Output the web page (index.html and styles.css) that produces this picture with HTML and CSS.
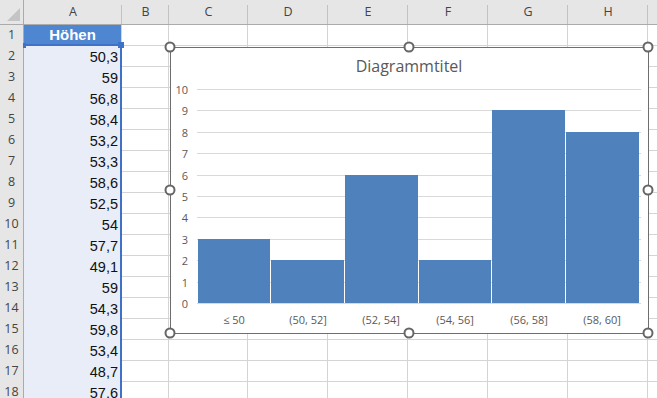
FILE: index.html
```html
<!DOCTYPE html>
<html lang="de">
<head>
<meta charset="utf-8">
<title>Histogramm</title>
<link rel="stylesheet" href="styles.css">
</head>
<body>
<div class="sheet">
  <div class="row hdr">
    <div class="corner"><span class="tri"></span></div>
    <div class="ch">A</div><div class="ch">B</div><div class="ch">C</div><div class="ch">D</div><div class="ch">E</div><div class="ch">F</div><div class="ch">G</div><div class="ch">H</div><div class="ch"></div>
  </div>
  <div class="row"><div class="rh">1</div><div class="c title-cell">Höhen</div><div class="c"></div><div class="c"></div><div class="c"></div><div class="c"></div><div class="c"></div><div class="c"></div><div class="c"></div><div class="c"></div></div>
  <div class="row"><div class="rh">2</div><div class="c val">50,3</div><div class="c"></div><div class="c"></div><div class="c"></div><div class="c"></div><div class="c"></div><div class="c"></div><div class="c"></div><div class="c"></div></div>
  <div class="row"><div class="rh">3</div><div class="c val">59</div><div class="c"></div><div class="c"></div><div class="c"></div><div class="c"></div><div class="c"></div><div class="c"></div><div class="c"></div><div class="c"></div></div>
  <div class="row"><div class="rh">4</div><div class="c val">56,8</div><div class="c"></div><div class="c"></div><div class="c"></div><div class="c"></div><div class="c"></div><div class="c"></div><div class="c"></div><div class="c"></div></div>
  <div class="row"><div class="rh">5</div><div class="c val">58,4</div><div class="c"></div><div class="c"></div><div class="c"></div><div class="c"></div><div class="c"></div><div class="c"></div><div class="c"></div><div class="c"></div></div>
  <div class="row"><div class="rh">6</div><div class="c val">53,2</div><div class="c"></div><div class="c"></div><div class="c"></div><div class="c"></div><div class="c"></div><div class="c"></div><div class="c"></div><div class="c"></div></div>
  <div class="row"><div class="rh">7</div><div class="c val">53,3</div><div class="c"></div><div class="c"></div><div class="c"></div><div class="c"></div><div class="c"></div><div class="c"></div><div class="c"></div><div class="c"></div></div>
  <div class="row"><div class="rh">8</div><div class="c val">58,6</div><div class="c"></div><div class="c"></div><div class="c"></div><div class="c"></div><div class="c"></div><div class="c"></div><div class="c"></div><div class="c"></div></div>
  <div class="row"><div class="rh">9</div><div class="c val">52,5</div><div class="c"></div><div class="c"></div><div class="c"></div><div class="c"></div><div class="c"></div><div class="c"></div><div class="c"></div><div class="c"></div></div>
  <div class="row"><div class="rh">10</div><div class="c val">54</div><div class="c"></div><div class="c"></div><div class="c"></div><div class="c"></div><div class="c"></div><div class="c"></div><div class="c"></div><div class="c"></div></div>
  <div class="row"><div class="rh">11</div><div class="c val">57,7</div><div class="c"></div><div class="c"></div><div class="c"></div><div class="c"></div><div class="c"></div><div class="c"></div><div class="c"></div><div class="c"></div></div>
  <div class="row"><div class="rh">12</div><div class="c val">49,1</div><div class="c"></div><div class="c"></div><div class="c"></div><div class="c"></div><div class="c"></div><div class="c"></div><div class="c"></div><div class="c"></div></div>
  <div class="row"><div class="rh">13</div><div class="c val">59</div><div class="c"></div><div class="c"></div><div class="c"></div><div class="c"></div><div class="c"></div><div class="c"></div><div class="c"></div><div class="c"></div></div>
  <div class="row"><div class="rh">14</div><div class="c val">54,3</div><div class="c"></div><div class="c"></div><div class="c"></div><div class="c"></div><div class="c"></div><div class="c"></div><div class="c"></div><div class="c"></div></div>
  <div class="row"><div class="rh">15</div><div class="c val">59,8</div><div class="c"></div><div class="c"></div><div class="c"></div><div class="c"></div><div class="c"></div><div class="c"></div><div class="c"></div><div class="c"></div></div>
  <div class="row"><div class="rh">16</div><div class="c val">53,4</div><div class="c"></div><div class="c"></div><div class="c"></div><div class="c"></div><div class="c"></div><div class="c"></div><div class="c"></div><div class="c"></div></div>
  <div class="row"><div class="rh">17</div><div class="c val">48,7</div><div class="c"></div><div class="c"></div><div class="c"></div><div class="c"></div><div class="c"></div><div class="c"></div><div class="c"></div><div class="c"></div></div>
  <div class="row"><div class="rh">18</div><div class="c val">57,6</div><div class="c"></div><div class="c"></div><div class="c"></div><div class="c"></div><div class="c"></div><div class="c"></div><div class="c"></div><div class="c"></div></div>

  <div class="sel"><span class="sq sq-l"></span><span class="sq sq-r"></span></div>

  <div class="chart">
    <svg class="plot" width="477" height="285" viewBox="0 0 477 285">
      <text class="ttl" x="238" y="24" text-anchor="middle">Diagrammtitel</text>
      <g class="grid">
        <line x1="26" x2="470" y1="41.5" y2="41.5"/>
        <line x1="26" x2="470" y1="62.5" y2="62.5"/>
        <line x1="26" x2="470" y1="84.5" y2="84.5"/>
        <line x1="26" x2="470" y1="105.5" y2="105.5"/>
        <line x1="26" x2="470" y1="127.5" y2="127.5"/>
        <line x1="26" x2="470" y1="148.5" y2="148.5"/>
        <line x1="26" x2="470" y1="169.5" y2="169.5"/>
        <line x1="26" x2="470" y1="191.5" y2="191.5"/>
        <line x1="26" x2="470" y1="212.5" y2="212.5"/>
        <line x1="26" x2="470" y1="234.5" y2="234.5"/>
        <line x1="26" x2="470" y1="255.5" y2="255.5"/>
      </g>
      <g class="ylab" text-anchor="end">
        <text x="17" y="45.5">10</text>
        <text x="17" y="66.5">9</text>
        <text x="17" y="88.5">8</text>
        <text x="17" y="109.5">7</text>
        <text x="17" y="131.5">6</text>
        <text x="17" y="152.5">5</text>
        <text x="17" y="173.5">4</text>
        <text x="17" y="195.5">3</text>
        <text x="17" y="216.5">2</text>
        <text x="17" y="238.5">1</text>
        <text x="17" y="259.5">0</text>
      </g>
      <g class="bars">
        <rect x="27" y="191" width="72" height="64"/>
        <rect x="100" y="212" width="73" height="43"/>
        <rect x="174" y="127" width="73" height="128"/>
        <rect x="248" y="212" width="72" height="43"/>
        <rect x="321" y="62" width="73" height="193"/>
        <rect x="395" y="84" width="73" height="171"/>
      </g>
      <g class="xlab" text-anchor="middle">
        <text x="63" y="276">≤ 50</text>
        <text x="137" y="276">(50, 52]</text>
        <text x="210" y="276">(52, 54]</text>
        <text x="284" y="276">(54, 56]</text>
        <text x="358" y="276">(56, 58]</text>
        <text x="431" y="276">(58, 60]</text>
      </g>
    </svg>
    <span class="hd hd-tl"></span><span class="hd hd-tm"></span><span class="hd hd-tr"></span>
    <span class="hd hd-ml"></span><span class="hd hd-mr"></span>
    <span class="hd hd-bl"></span><span class="hd hd-bm"></span><span class="hd hd-br"></span>
  </div>
</div>
</body>
</html>
```
FILE: styles.css
```css
html, body {
  margin: 0;
  padding: 0;
  background: #fff;
}
body {
  font-family: "Open Sans", "Noto Sans", "DejaVu Sans", sans-serif;
}
.sheet {
  position: relative;
  width: 657px;
  height: 398px;
  overflow: hidden;
  background: #fff;
}
.row {
  display: grid;
  grid-template-columns: 24px 98px 47px 79px 80px 80px 80px 80px 80px 80px;
  height: 21px;
}
.row.hdr {
  height: 24px;
}
.corner {
  position: relative;
  background: #e6e6e6;
  border-right: 1px solid #ababab;
  border-bottom: 1px solid #ababab;
  box-sizing: border-box;
}
.tri {
  position: absolute;
  right: 3px;
  bottom: 3px;
  width: 13px;
  height: 13px;
  background: #c4c4c4;
  clip-path: polygon(100% 0, 100% 100%, 0 100%);
}
.ch {
  position: relative;
  background: #e6e6e6;
  border-bottom: 1px solid #ababab;
  box-sizing: border-box;
  font-size: 12.5px;
  color: #444;
  text-align: center;
  line-height: 24px;
}
.ch::after {
  content: "";
  position: absolute;
  right: 0;
  top: 5px;
  bottom: 0;
  width: 1px;
  background: #c2c2c2;
}
.rh {
  background: #e6e6e6;
  border-right: 1px solid #ababab;
  border-bottom: 1px solid #cfcfcf;
  box-sizing: border-box;
  font-size: 12.5px;
  color: #444;
  text-align: center;
  line-height: 21px;
}
.c {
  border-right: 1px solid #d4d4d4;
  border-bottom: 1px solid #d4d4d4;
  box-sizing: border-box;
}
.val {
  background: #e8edf7;
  border-bottom-color: #d7dce5;
  font-family: "Liberation Sans", Arial, sans-serif;
  font-size: 14.5px;
  color: #111;
  text-align: right;
  padding-right: 3px;
  line-height: 16px;
  display: flex;
  align-items: flex-end;
  justify-content: flex-end;
  padding-bottom: 1px;
}
.title-cell {
  background: #4f86d1;
  border-bottom-color: #4f86d1;
  color: #fff;
  font-family: "Liberation Sans", Arial, sans-serif;
  font-weight: bold;
  font-size: 15px;
  line-height: 16px;
  display: flex;
  align-items: flex-end;
  justify-content: center;
  padding-bottom: 2px;
}
.sel {
  position: absolute;
  left: 24px;
  top: 44px;
  width: 98px;
  height: 360px;
  box-sizing: border-box;
  border-top: 2px solid #3f72c7;
  border-right: 2px solid #3f72c7;
}
.sq {
  position: absolute;
  background: #3f72c7;
}
.sq-l {
  left: -1px;
  top: -3px;
  width: 3px;
  height: 5px;
}
.sq-r {
  right: -4px;
  top: -4px;
  width: 6px;
  height: 6px;
}
.chart {
  position: absolute;
  left: 170px;
  top: 47px;
  width: 479px;
  height: 287px;
  box-sizing: border-box;
  border: 1px solid #6e6e6e;
  background: #fff;
}
.plot {
  display: block;
}
.ttl {
  font-family: "Open Sans", "Noto Sans", sans-serif;
  font-size: 16px;
  fill: #595959;
}
.grid line {
  stroke: #d9d9d9;
  stroke-width: 1;
}
.bars rect {
  fill: #4f81bd;
}
.ylab text,
.xlab text {
  font-family: "Open Sans", "Noto Sans", sans-serif;
  font-size: 11px;
  fill: #595959;
}
.hd {
  position: absolute;
  width: 11px;
  height: 11px;
  box-sizing: border-box;
  border: 2px solid #666;
  border-radius: 50%;
  background: #fff;
  transform: translate(-50%, -50%);
}
.hd-tl { left: -1px; top: -1px; }
.hd-tm { left: 238px; top: -1px; }
.hd-tr { left: 477px; top: -1px; }
.hd-ml { left: -1px; top: 142px; }
.hd-mr { left: 477px; top: 142px; }
.hd-bl { left: -1px; top: 285px; }
.hd-bm { left: 238px; top: 285px; }
.hd-br { left: 477px; top: 285px; }
```
